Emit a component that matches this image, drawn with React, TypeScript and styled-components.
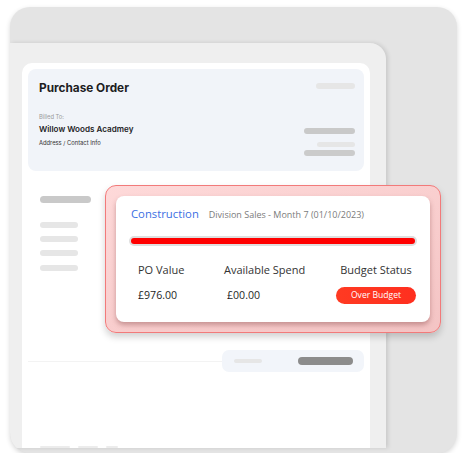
import React from 'react'
import styled, { createGlobalStyle } from 'styled-components'

const GlobalStyle = createGlobalStyle`
  html, body {
    margin: 0;
    padding: 0;
    background: #ffffff;
  }
  body {
    font-family: 'Inter', 'Liberation Sans', sans-serif;
  }
`

const Frame = styled.div`
  position: relative;
  box-sizing: border-box;
  margin: 7px 0 0 10px;
  width: 447px;
  height: 446px;
  padding: 36px 0 5px 0;
  border-radius: 20px;
  background: #e4e4e4;
  box-shadow: 0 2px 5px rgba(0, 0, 0, 0.16);
  overflow: hidden;
  display: flex;
  flex-direction: column;
`

const Window = styled.div`
  box-sizing: border-box;
  width: 376px;
  flex: 1;
  padding: 20px 16px 0 12px;
  background: #efefef;
  border-top-right-radius: 16px;
  box-shadow: 2px 0 4px rgba(0, 0, 0, 0.12);
  display: flex;
  flex-direction: column;
`

const Sheet = styled.div`
  flex: 1;
  background: #ffffff;
  border-radius: 10px 10px 0 0;
  padding: 6px 6px 0;
  display: flex;
  flex-direction: column;
`

const Header = styled.div`
  display: flex;
  justify-content: space-between;
  padding: 12px 9px 15px 11px;
  border-radius: 8px;
  background: #f1f4f9;
`

const HeaderText = styled.div`
  display: flex;
  flex-direction: column;
`

const Title = styled.div`
  font-size: 11.8px;
  line-height: 14px;
  font-weight: 700;
  color: #1d1d1f;
`

const Caption = styled.div<{ $gap: number }>`
  margin-top: ${p => p.$gap}px;
  font-size: 5.8px;
  line-height: 8px;
  color: ${p => (p.$gap > 10 ? '#9a9a9a' : '#333333')};
`

const Client = styled.div`
  margin-top: 3px;
  font-size: 8.1px;
  line-height: 11px;
  font-weight: 600;
  color: #1d1d1f;
`

const BarStack = styled.div`
  display: flex;
  flex-direction: column;
  align-items: flex-end;
  padding-top: 2px;
`

const Bar = styled.div<{ $w: number; $h: number; $tone: string; $gap?: number }>`
  width: ${p => p.$w}px;
  height: ${p => p.$h}px;
  margin-top: ${p => p.$gap ?? 0}px;
  border-radius: ${p => p.$h / 2}px;
  background: ${p => p.$tone};
  flex: none;
`

const Lines = styled.div`
  display: flex;
  flex-direction: column;
  padding-left: 12px;
  margin-top: 25px;
`

const TotalsRow = styled.div`
  display: flex;
  align-items: center;
  margin-top: 79px;
`

const Rule = styled.div`
  flex: 1;
  height: 1px;
  background: #f3f3f3;
`

const Totals = styled.div`
  box-sizing: border-box;
  width: 142px;
  height: 22px;
  padding: 0 11px 0 12px;
  display: flex;
  align-items: center;
  justify-content: space-between;
  border-radius: 7px;
  background: #f2f5fa;
`

const Footer = styled.div`
  margin-top: auto;
  display: flex;
  gap: 8px;
  padding-left: 12px;
`

const Alert = styled.div`
  position: absolute;
  left: 95px;
  top: 178px;
  box-sizing: border-box;
  width: 336px;
  height: 148px;
  padding: 10px;
  border: 1px solid #f27a7a;
  border-radius: 11px;
  background: linear-gradient(160deg, #fed9d9, #f4c4c4);
  box-shadow: 0 4px 7px rgba(0, 0, 0, 0.18);
  font-family: 'Open Sans', 'Liberation Sans', sans-serif;
`

const AlertCard = styled.div`
  box-sizing: border-box;
  height: 126px;
  padding: 10px 13px 0;
  border-radius: 8px;
  background: #ffffff;
  box-shadow: 0 3px 5px rgba(110, 40, 40, 0.35);
`

const AlertHead = styled.div`
  display: flex;
  align-items: baseline;
  gap: 10px;
  padding-left: 2px;
`

const Division = styled.span`
  font-size: 11.3px;
  color: #3b6fe3;
`

const Period = styled.span`
  font-size: 9px;
  color: #7b7b7b;
`

const Track = styled.div`
  box-sizing: border-box;
  margin-top: 15px;
  height: 10px;
  padding: 2px;
  border-radius: 5px;
  background: #dedede;
`

const Fill = styled.div`
  height: 100%;
  border-radius: 3px;
  background: #ff0000;
`

const Stats = styled.div`
  display: grid;
  grid-template-columns: 86px 112px 80px;
  grid-template-rows: 28px 24px;
  align-items: center;
  padding: 9px 0 0 9px;
`

const Label = styled.div<{ $center?: boolean }>`
  font-size: 11px;
  color: #333333;
  white-space: nowrap;
  text-align: ${p => (p.$center ? 'center' : 'left')};
`

const Value = styled.div<{ $shift?: number }>`
  font-size: 10.6px;
  color: #1d1d1d;
  padding-left: ${p => p.$shift ?? 0}px;
`

const Pill = styled.div`
  height: 17px;
  border-radius: 9px;
  background: linear-gradient(90deg, #ff3a22, #ff2f1f);
  color: #ffffff;
  font-size: 8.6px;
  line-height: 17px;
  text-align: center;
`

const stats = [
  { label: 'PO Value', value: '£976.00' },
  { label: 'Available Spend', value: '£00.00' },
]

export default function App() {
  const spent = 976
  const available = 0
  const pct = available > 0 ? Math.min(100, (spent / available) * 100) : 100

  return (
    <>
      <GlobalStyle />
      <Frame>
        <Window>
          <Sheet>
            <Header>
              <HeaderText>
                <Title>Purchase Order</Title>
                <Caption $gap={18}>Billed To:</Caption>
                <Client>Willow Woods Acadmey</Client>
                <Caption $gap={4}>Address / Contact Info</Caption>
              </HeaderText>
              <BarStack>
                <Bar $w={39} $h={6} $tone="#e6e6e6" />
                <Bar $w={51} $h={6} $tone="#c9c9c9" $gap={39} />
                <Bar $w={38} $h={5} $tone="#e6e6e6" $gap={8} />
                <Bar $w={51} $h={6} $tone="#cbcbcb" $gap={3} />
              </BarStack>
            </Header>

            <Lines>
              <Bar $w={51} $h={7} $tone="#c9c9c9" />
              <Bar $w={38} $h={6} $tone="#e6e6e6" $gap={19} />
              <Bar $w={38} $h={6} $tone="#e6e6e6" $gap={8} />
              <Bar $w={38} $h={6} $tone="#e6e6e6" $gap={8} />
              <Bar $w={38} $h={6} $tone="#e6e6e6" $gap={9} />
            </Lines>

            <TotalsRow>
              <Rule />
              <Totals>
                <Bar $w={28} $h={4} $tone="#e6e6e6" />
                <Bar $w={55} $h={8} $tone="#8c8c8c" />
              </Totals>
            </TotalsRow>

            <Footer>
              <Bar $w={30} $h={2} $tone="#ececec" />
              <Bar $w={20} $h={2} $tone="#ececec" />
              <Bar $w={12} $h={2} $tone="#ececec" />
            </Footer>
          </Sheet>
        </Window>

        <Alert>
          <AlertCard>
            <AlertHead>
              <Division>Construction</Division>
              <Period>Division Sales - Month 7 (01/10/2023)</Period>
            </AlertHead>
            <Track>
              <Fill style={{ width: `${pct}%` }} />
            </Track>
            <Stats>
              {stats.map(s => (
                <Label key={s.label}>{s.label}</Label>
              ))}
              <Label $center>Budget Status</Label>
              {stats.map((s, i) => (
                <Value key={s.value} $shift={i === 1 ? 3 : 0}>
                  {s.value}
                </Value>
              ))}
              <Pill>Over Budget</Pill>
            </Stats>
          </AlertCard>
        </Alert>
      </Frame>
    </>
  )
}
